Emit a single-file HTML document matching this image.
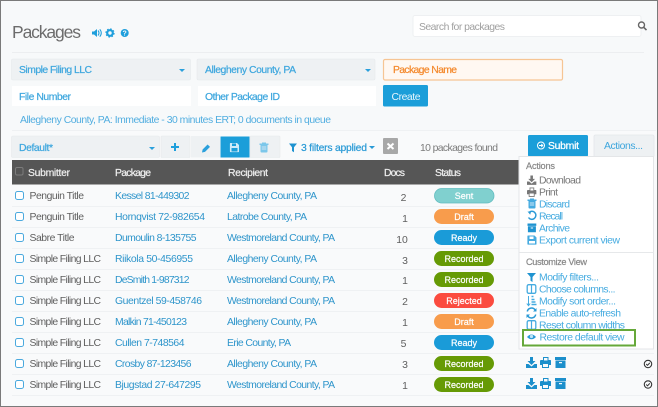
<!DOCTYPE html>
<html><head><meta charset="utf-8"><title>Packages</title>
<style>
html,body{margin:0;padding:0;width:658px;height:407px;overflow:hidden;background:#f7f9fa}
svg{display:block;position:absolute;left:0;top:0;filter:blur(.3px)}
text{font-family:"Liberation Sans",sans-serif;font-size:10.4px;white-space:pre}
.g{fill:#5f5f5f}.l{fill:#2e95cb}.b{fill:#3da6dd}
.s{fill:#3ea7de;stroke:#3ea7de;stroke-width:.22px}
.h{fill:#eeeeee;stroke:#eeeeee;stroke-width:.22px}
.p{fill:#fff;stroke:#fff;stroke-width:.2px;font-size:9px;text-anchor:middle}
.m{fill:#45abe0;font-size:10.4px}.mg{fill:#777;font-size:10.4px}
.mh{fill:#888;stroke:#888;stroke-width:.2px;font-size:9.2px}
.d{fill:#5f5f5f;text-anchor:middle;font-size:10.4px}
</style></head><body>
<svg width="658" height="407" viewBox="0 0 658 407" xmlns="http://www.w3.org/2000/svg">
<defs>
<g id="cb"><rect x="0.5" y="0.5" width="8" height="8" rx="2" fill="#fff" stroke="#4aa9de" stroke-width="1"/></g>
<g id="dl"><path d="M4 0h3v4h2.500L5.500 8 1.500 4H4zM0 7h2.500l3 2.500L8.500 7H11v4H0z"/></g>
<g id="pr"><path d="M3 0h5.500v3H10.500q.5 0 .5 1v4H9v3H2V8H0V4q0-1 1-1h2zm1 1v2.500h3.500V1zM3 7v3h5V7z" fill-rule="evenodd"/></g>
<g id="ar"><path d="M0 0h11v3H0zM0.500 3.500h10V11h-10zM4 5v1.200h3V5z" fill-rule="evenodd"/></g>
<g id="col"><rect x="0.700" y="0.700" width="8.600" height="8.600" rx="1.500" fill="none" stroke="#45abe0" stroke-width="1.300"/><path d="M5 1v8" stroke="#45abe0" stroke-width="1.200"/></g>
<g id="ck"><circle cx="0" cy="0" r="3.700" fill="none" stroke="#333" stroke-width="1.100"/><path d="M-1.800 0l1.300 1.300 2.300-2.400" fill="none" stroke="#333" stroke-width="1"/></g>
</defs>

<rect width="658" height="407" fill="#f7f9fa"/>
<rect x="0" y="130" width="658" height="277" fill="#f9fafb"/>
<rect x="12" y="130" width="644" height="1" fill="#eff1f3"/>
<path d="M.5 407V.5H657.500V407M0 406.500H658" fill="none" stroke="#7a7a7a" stroke-width="1"/>

<!-- title -->
<text x="12" y="38" style="font-size:17.500px" fill="#6c6c6c" textLength="69">Packages</text>
<g fill="#1f9fdc">
<path d="M92 31.500h2l3-2.500v8l-3-2.500h-2z"/><path d="M98 30.500q2 2.500 0 5M99.800 29.300q3 3.700 0 7.400" fill="none" stroke="#1f9fdc" stroke-width="1.100"/>
<circle cx="110" cy="33" r="2.800" fill="none" stroke="#1f9fdc" stroke-width="2.200"/><circle cx="110" cy="33" r="4.100" fill="none" stroke="#1f9fdc" stroke-width="1.100" stroke-dasharray="1.600 1.620"/>
<circle cx="124.700" cy="33" r="4"/>
</g>
<text x="124.700" y="35.500" style="font-size:7px;font-weight:bold;text-anchor:middle" fill="#f7f9fa">?</text>

<!-- search -->
<rect x="413" y="15.500" width="228" height="21" rx="2" fill="#fff" stroke="#eef0f2"/>
<text x="419" y="30" fill="#a0a0a0" textLength="86">Search for packages</text>
<circle cx="641.500" cy="25" r="3" fill="#fff" stroke="#666" stroke-width="1.400"/><path d="M643.700 27.300l2.800 2.800" stroke="#666" stroke-width="1.600"/>
<rect x="12" y="52" width="632" height="1" fill="#eceef0"/>

<!-- filters -->
<rect x="11.500" y="59" width="179" height="21" rx="1.500" fill="#eef1f3" stroke="#e6e9ec" stroke-width=".6"/>
<text x="19" y="73" class="s" textLength="73">Simple Filing LLC</text>
<path d="M179 69h6l-3 3z" fill="#2aa0dc"/>
<rect x="197" y="59" width="178" height="21" rx="1.500" fill="#eef1f3" stroke="#e6e9ec" stroke-width=".6"/>
<text x="205" y="73" class="s" textLength="91">Allegheny County, PA</text>
<path d="M365 69h6l-3 3z" fill="#2aa0dc"/>
<rect x="383.500" y="59.500" width="179" height="20.500" rx="1.500" fill="#fff8f2" stroke="#f6c594" stroke-width="1.200"/>
<text x="393" y="73" style="fill:#f4892c;stroke:#f4892c;stroke-width:.22px" textLength="64">Package Name</text>
<rect x="12" y="86" width="179" height="20" fill="#fff"/>
<text x="19" y="100" class="s" textLength="52">File Number</text>
<rect x="198" y="86" width="178" height="20" fill="#fff"/>
<text x="205" y="100" class="s" textLength="75">Other Package ID</text>
<rect x="383" y="85" width="45" height="21.500" rx="1.500" fill="#1b9ed9"/>
<text x="391.500" y="100" style="fill:#e8f6fd" textLength="29">Create</text>
<text x="20" y="123" fill="#52aee0" textLength="311">Allegheny County, PA: Immediate - 30 minutes ERT; 0 documents in queue</text>

<!-- toolbar -->
<rect x="11.500" y="136" width="148" height="21.500" rx="1.500" fill="#eef1f3" stroke="#e6e9ec" stroke-width=".6"/>
<text x="19" y="151" class="s" textLength="34">Default*</text>
<path d="M149 147h6l-3 3z" fill="#2aa0dc"/>
<rect x="161" y="136" width="29" height="21.500" rx="1" fill="#eef1f3" stroke="#e6e9ec" stroke-width=".6"/>
<rect x="191" y="136" width="29" height="21.500" fill="#eef1f3"/>
<rect x="250" y="136" width="30" height="21.500" rx="1" fill="#eef1f3" stroke="#e6e9ec" stroke-width=".6"/>
<rect x="220.500" y="136.500" width="29" height="21" fill="#1b9ed9"/>
<path d="M171 147h8M175 143v8" stroke="#1f9fdc" stroke-width="2"/>
<path d="M202 152.500l.6-3 5-5 2.400 2.400-5 5z" fill="#2aa0dc"/>
<path d="M230.500 143h6.500l2 2v6.500q0 .6-.6.600h-7.900q-.6 0-.6-.6v-7.900q0-.6.600-.6zM232 143.500v2.500h4v-2.500zM231.500 148v3.500h6V148z" fill="#cfeaf8" fill-rule="evenodd"/>
<path d="M260.500 145h7v6.500q0 1-1 1h-5q-1 0-1-1zM259.500 143.500h9V145h-9zM262 142.500h4v1h-4z" fill="#7cc7ea"/>
<path d="M261.700 147h4.600M261.700 149h4.600" stroke="#eef1f3" stroke-width=".8"/>
<path d="M289 143.500h8l-3 3.700v5l-2-1.200v-3.800z" fill="#1f93d0"/>
<text x="301" y="151" style="fill:#2a9ad6;stroke:#2a9ad6;stroke-width:.22px" textLength="66">3 filters applied</text>
<path d="M369 146h6l-3 3z" fill="#2a9ad6"/>
<rect x="383" y="138" width="15" height="16" rx="1" fill="#a8a8a8"/>
<path d="M387.500 143.500l6 5.500M393.500 143.500l-6 5.500" stroke="#fff" stroke-width="2"/>
<text x="420" y="151" fill="#7b7b7b" textLength="78">10 packages found</text>
<rect x="528" y="135" width="60" height="21.500" rx="1.500" fill="#1b9ed9"/>
<circle cx="541" cy="145.500" r="3.500" fill="none" stroke="#fff" stroke-width="1"/><path d="M539 145.500h3.600M541.300 144l1.500 1.500-1.500 1.500" fill="none" stroke="#fff" stroke-width=".9"/>
<text x="548" y="149" style="fill:#fff;stroke:#fff;stroke-width:.25px" textLength="31">Submit</text>
<rect x="594" y="135" width="60" height="22" rx="1.500" fill="#eef1f3" stroke="#e3e7ea" stroke-width=".8"/>
<text x="604" y="149" class="b" textLength="39">Actions...</text>

<!-- table header -->
<rect x="12" y="160" width="642" height="24.500" fill="#565656"/>
<rect x="15.500" y="167.500" width="7.500" height="7.500" rx="1.500" fill="#555" stroke="#7c7c7c"/>
<text x="28" y="176" class="h" textLength="42">Submitter</text>
<text x="115" y="176" class="h" textLength="36">Package</text>
<text x="228" y="176" class="h" textLength="40">Recipient</text>
<text x="384" y="176" class="h" textLength="21">Docs</text>
<text x="435" y="176" class="h" textLength="26">Status</text>

<!-- row separators -->
<g fill="#eff1f3">
<rect x="12" y="206" width="642" height="1"/><rect x="12" y="227" width="642" height="1"/><rect x="12" y="248" width="642" height="1"/><rect x="12" y="269" width="642" height="1"/><rect x="12" y="290" width="642" height="1"/><rect x="12" y="311" width="642" height="1"/><rect x="12" y="332" width="642" height="1"/><rect x="12" y="353" width="642" height="1"/><rect x="12" y="374" width="642" height="1"/><rect x="12" y="395" width="642" height="1"/>
</g>

<!-- checkboxes -->
<use href="#cb" x="15" y="191"/><use href="#cb" x="15" y="212"/><use href="#cb" x="15" y="233"/><use href="#cb" x="15" y="254"/><use href="#cb" x="15" y="275"/><use href="#cb" x="15" y="296"/><use href="#cb" x="15" y="317"/><use href="#cb" x="15" y="338"/><use href="#cb" x="15" y="359"/><use href="#cb" x="15" y="380"/>

<!-- submitter -->
<text x="29.500" y="199" class="g" textLength="54.500">Penguin Title</text>
<text x="29.500" y="220" class="g" textLength="54.500">Penguin Title</text>
<text x="29.500" y="241" class="g" textLength="45">Sabre Title</text>
<text x="29.500" y="262" class="g" textLength="71.500">Simple Filing LLC</text>
<text x="29.500" y="283" class="g" textLength="71.500">Simple Filing LLC</text>
<text x="29.500" y="304" class="g" textLength="71.500">Simple Filing LLC</text>
<text x="29.500" y="325" class="g" textLength="71.500">Simple Filing LLC</text>
<text x="29.500" y="346" class="g" textLength="71.500">Simple Filing LLC</text>
<text x="29.500" y="367" class="g" textLength="71.500">Simple Filing LLC</text>
<text x="29.500" y="388" class="g" textLength="71.500">Simple Filing LLC</text>

<!-- package -->
<text x="115" y="199" class="l" textLength="74.500">Kessel 81-449302</text>
<text x="115" y="220" class="l" textLength="90">Hornqvist 72-982654</text>
<text x="115" y="241" class="l" textLength="81.500">Dumoulin 8-135755</text>
<text x="115" y="262" class="l" textLength="78">Riikola 50-456955</text>
<text x="115" y="283" class="l" textLength="74.500">DeSmith 1-987312</text>
<text x="115" y="304" class="l" textLength="87">Guentzel 59-458746</text>
<text x="115" y="325" class="l" textLength="72">Malkin 71-450123</text>
<text x="115" y="346" class="l" textLength="69.500">Cullen 7-748564</text>
<text x="115" y="367" class="l" textLength="76.500">Crosby 87-123456</text>
<text x="115" y="388" class="l" textLength="86">Bjugstad 27-647295</text>

<!-- recipient -->
<text x="227" y="199" class="l" textLength="90">Allegheny County, PA</text>
<text x="227" y="220" class="l" textLength="80">Latrobe County, PA</text>
<text x="227" y="241" class="l" textLength="108">Westmoreland County, PA</text>
<text x="227" y="262" class="l" textLength="90">Allegheny County, PA</text>
<text x="227" y="283" class="l" textLength="108">Westmoreland County, PA</text>
<text x="227" y="304" class="l" textLength="108">Westmoreland County, PA</text>
<text x="227" y="325" class="l" textLength="90">Allegheny County, PA</text>
<text x="227" y="346" class="l" textLength="64">Erie County, PA</text>
<text x="227" y="367" class="l" textLength="90">Allegheny County, PA</text>
<text x="227" y="388" class="l" textLength="108">Westmoreland County, PA</text>

<!-- docs -->
<text x="403.500" y="201" class="d">2</text>
<text x="405" y="222" class="d">1</text>
<text x="402" y="243" class="d">10</text>
<text x="405" y="264" class="d">3</text>
<text x="405" y="284" class="d">1</text>
<text x="405" y="305" class="d">2</text>
<text x="405" y="326" class="d">1</text>
<text x="403.500" y="347" class="d">5</text>
<text x="405" y="368" class="d">3</text>
<text x="405" y="389" class="d">1</text>

<!-- pills -->
<rect x="434.500" y="188.500" width="59.500" height="14.500" rx="7.200" fill="#80d0cf" stroke="#62bcc0" stroke-width=".8"/><text x="464" y="199" class="p">Sent</text>
<rect x="434" y="209" width="60" height="15" rx="7.500" fill="#f89c4c"/><text x="464" y="220" class="p">Draft</text>
<rect x="434" y="230" width="60" height="15" rx="7.500" fill="#1a9bd8"/><text x="464" y="241" class="p">Ready</text>
<rect x="434" y="251" width="60" height="15" rx="7.500" fill="#669a05"/><text x="464" y="262" class="p">Recorded</text>
<rect x="434" y="272" width="60" height="15" rx="7.500" fill="#669a05"/><text x="464" y="283" class="p">Recorded</text>
<rect x="434" y="293" width="60" height="15" rx="7.500" fill="#fb4b3f"/><text x="464" y="304" class="p">Rejected</text>
<rect x="434" y="314" width="60" height="15" rx="7.500" fill="#f89c4c"/><text x="464" y="325" class="p">Draft</text>
<rect x="434" y="335" width="60" height="15" rx="7.500" fill="#1a9bd8"/><text x="464" y="346" class="p">Ready</text>
<rect x="434" y="356" width="60" height="15" rx="7.500" fill="#669a05"/><text x="464" y="367" class="p">Recorded</text>
<rect x="434" y="377" width="60" height="15" rx="7.500" fill="#669a05"/><text x="464" y="388" class="p">Recorded</text>

<!-- row action icons -->
<g fill="#1c8fcb">
<use href="#dl" x="526" y="357"/><use href="#pr" x="540" y="357"/><use href="#ar" x="555" y="357"/>
<use href="#dl" x="526" y="378"/><use href="#pr" x="540" y="378"/><use href="#ar" x="555" y="378"/>
</g>
<use href="#ck" x="648" y="364"/><use href="#ck" x="648" y="384.500"/>

<!-- dropdown -->
<rect x="519" y="156.500" width="134.500" height="192.500" fill="#fff" stroke="#e4e6e8" stroke-width="1"/>
<text x="526" y="169" class="mh" textLength="29">Actions</text>
<g fill="#777"><use href="#dl" transform="translate(527 175.500) scale(.85)"/><use href="#pr" transform="translate(527 187.500) scale(.85)"/></g>
<text x="539" y="183.500" class="mg" textLength="42">Download</text>
<text x="539" y="195.500" class="mg" textLength="19">Print</text>
<path d="M528.500 201h7v6.500q0 1-1 1h-5q-1 0-1-1zM527.500 199.500h9v1.500h-9zM530 198.500h4v1h-4z" fill="#45abe0"/><path d="M529.800 203h4.400M529.800 205h4.400" stroke="#fff" stroke-width=".8"/>
<text x="539" y="207.500" class="m" textLength="31">Discard</text>
<path d="M529 212.500a4 4 0 1 1-.5 5" fill="none" stroke="#2a9ad6" stroke-width="1.500"/><path d="M527.500 211.500l3.500.3-.8 3z" fill="#2a9ad6"/>
<text x="539" y="219.500" class="m" textLength="24">Recall</text>
<g fill="#1f93d0"><use href="#ar" transform="translate(527.500 223.500) scale(.8)"/></g>
<text x="539" y="231.500" class="m" textLength="31">Archive</text>
<path d="M528 235.500h6.500l2 2v6.500q0 .6-.6.600h-7.900q-.6 0-.6-.6v-7.900q0-.6.600-.6zM529.500 236.500v2.500h4v-2.500zM529 241v2.500h6V241z" fill="#45abe0" fill-rule="evenodd"/>
<text x="539" y="243.500" class="m" textLength="81">Export current view</text>
<rect x="519.500" y="252" width="134" height="1" fill="#e6e8ea"/>
<text x="526" y="265" class="mh" textLength="61">Customize View</text>

<path d="M527 273h9l-3.500 4v5l-2-1.200V277z" fill="#1f93d0"/>
<text x="539" y="280.500" class="m" textLength="60">Modify filters...</text>
<use href="#col" x="526.500" y="284"/>
<text x="539" y="292.500" class="m" textLength="76.500">Choose columns...</text>
<path d="M528.500 296v9.500M526.800 303.500l1.700 2.200 1.700-2.200" fill="none" stroke="#45abe0" stroke-width="1"/><path d="M531.500 296.500h2M531.500 299.500h3M531.500 302h4M531.500 304.500h5" stroke="#45abe0" stroke-width="1.400"/>
<text x="539" y="304.500" class="m" textLength="77">Modify sort order...</text>
<path d="M527.300 311.500a4.300 4.300 0 0 1 7.800-1.500M535.700 314.500a4.300 4.300 0 0 1-7.800 1.500" fill="none" stroke="#2a9ad6" stroke-width="1.500"/><path d="M536.500 308v3.500h-3.500zM526.500 318v-3.500h3.500z" fill="#2a9ad6"/>
<text x="539" y="316.500" class="m" textLength="82">Enable auto-refresh</text>
<use href="#col" x="526.500" y="320"/>
<text x="539" y="328.500" class="m" textLength="86">Reset column widths</text>
<path d="M527 337q4.500-5 9 0-4.500 4.500-9 0z" fill="#2a9ad6"/><circle cx="531.500" cy="336.500" r="1.600" fill="#bfe3f5"/>
<text x="539.500" y="340.500" class="m" textLength="85">Restore default view</text>
<rect x="523" y="330" width="112" height="15.500" fill="none" stroke="#66a83a" stroke-width="2"/>
</svg>
</body></html>
